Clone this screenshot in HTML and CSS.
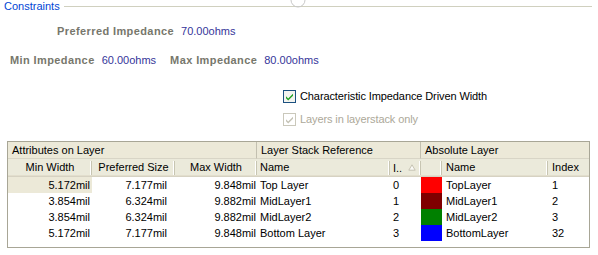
FILE: index.html
```html
<!DOCTYPE html>
<html>
<head>
<meta charset="utf-8">
<link rel="stylesheet" href="styles.css">
</head>
<body>
<div class="page">
  <div class="group-title">
    <span class="group-label">Constraints</span>
    <span class="group-line"></span>
  </div>
  <svg class="knob" width="16" height="8" viewBox="0 0 16 8"><path d="M1 0 A7 7 0 0 0 15 0" fill="none" stroke="#c8c8c8" stroke-width="1"/></svg>

  <div class="imp-row pref">
    <span class="imp-label">Preferred Impedance</span>
    <span class="imp-value">70.00ohms</span>
  </div>
  <div class="imp-row minmax">
    <span class="imp-label">Min Impedance</span>
    <span class="imp-value">60.00ohms</span>
    <span class="imp-label gap">Max Impedance</span>
    <span class="imp-value">80.00ohms</span>
  </div>

  <div class="check-row first">
    <span class="cb">
      <svg width="13" height="13" viewBox="0 0 13 13"><rect x="0.5" y="0.5" width="12" height="12" fill="#f4f4f0" stroke="#1c5180"/><path d="M3 6.2 L5.2 8.5 L10 3.8 L10 5.8 L5.2 10.5 L3 8.2 Z" fill="#21a121"/></svg>
    </span>
    <span class="cb-label">Characteristic Impedance Driven Width</span>
  </div>
  <div class="check-row second">
    <span class="cb">
      <svg width="13" height="13" viewBox="0 0 13 13"><rect x="0.5" y="0.5" width="12" height="12" fill="#ffffff" stroke="#cac8bb"/><path d="M3 6.2 L5.2 8.5 L10 3.8 L10 5.8 L5.2 10.5 L3 8.2 Z" fill="#c4c2b5"/></svg>
    </span>
    <span class="cb-label disabled">Layers in layerstack only</span>
  </div>

  <div class="grid-wrap">
    <div class="grid">
      <div class="gh span3">Attributes on Layer</div>
      <div class="gh span2">Layer Stack Reference</div>
      <div class="gh span3 last">Absolute Layer</div>

      <div class="sh center">Min Width</div>
      <div class="sh center">Preferred Size</div>
      <div class="sh center">Max Width</div>
      <div class="sh left3">Name</div>
      <div class="sh left3 sort">I.. <svg class="tri" width="8" height="7" viewBox="0 0 8 7"><path d="M4 0.8 L7.2 6.2 L0.8 6.2 Z" fill="#fafaf6" stroke="#c6c3b3" stroke-width="1"/></svg></div>
      <div class="sh"></div>
      <div class="sh left4">Name</div>
      <div class="sh left4 last">Index</div>

      <div class="c r1 focus">5.172mil</div><div class="c r2">7.177mil</div><div class="c r3">9.848mil</div><div class="c l3">Top Layer</div><div class="c l3">0</div><div class="c sw red"></div><div class="c l4">TopLayer</div><div class="c l4">1</div>
      <div class="c r1">3.854mil</div><div class="c r2">6.324mil</div><div class="c r3">9.882mil</div><div class="c l3">MidLayer1</div><div class="c l3">1</div><div class="c sw maroon"></div><div class="c l4">MidLayer1</div><div class="c l4">2</div>
      <div class="c r1">3.854mil</div><div class="c r2">6.324mil</div><div class="c r3">9.882mil</div><div class="c l3">MidLayer2</div><div class="c l3">2</div><div class="c sw green"></div><div class="c l4">MidLayer2</div><div class="c l4">3</div>
      <div class="c r1">5.172mil</div><div class="c r2">7.177mil</div><div class="c r3">9.848mil</div><div class="c l3">Bottom Layer</div><div class="c l3">3</div><div class="c sw blue"></div><div class="c l4">BottomLayer</div><div class="c l4">32</div>
    </div>
  </div>
</div>
</body>
</html>
```
FILE: styles.css
```css
html, body {
  margin: 0;
  padding: 0;
  background: #ffffff;
}
body {
  font-family: "Liberation Sans", Arial, sans-serif;
  font-size: 11px;
  color: #000000;
  width: 598px;
  height: 255px;
  overflow: hidden;
}
.page {
  position: relative;
  width: 598px;
  height: 255px;
}
.group-title {
  display: flex;
  align-items: center;
  height: 13px;
}
.group-label {
  color: #0046d5;
  padding-left: 4px;
  line-height: 13px;
}
.group-line {
  flex: 1;
  height: 1px;
  background: #d0d0bf;
  margin-left: 4px;
  margin-right: 6px;
}
.knob {
  position: absolute;
  left: 290px;
  top: 0;
}
.imp-row {
  display: flex;
  align-items: center;
  height: 14px;
  line-height: 14px;
}
.imp-row.pref {
  margin-top: 11px;
  padding-left: 57px;
}
.imp-row.minmax {
  margin-top: 15px;
  padding-left: 10px;
}
.imp-label {
  font-weight: bold;
  color: #77776c;
  letter-spacing: 0.4px;
  margin-right: 7px;
}
.imp-label.gap {
  margin-left: 14px;
}
.imp-value {
  color: #35359a;
  letter-spacing: 0px;
}
.check-row {
  display: flex;
  align-items: center;
  height: 14px;
  padding-left: 283px;
}
.check-row.first {
  margin-top: 22px;
}
.check-row.second {
  margin-top: 9px;
}
.cb {
  width: 13px;
  height: 13px;
  display: flex;
}
.cb-label {
  margin-left: 4px;
  line-height: 14px;
  letter-spacing: -0.1px;
}
.cb-label.disabled {
  color: #aca899;
}
.grid-wrap {
  margin-top: 15px;
  margin-left: 7px;
  width: 581px;
  height: 105px;
  border: 1px solid #a8a696;
  background: #ffffff;
}
.grid {
  display: grid;
  grid-template-columns: 84px 83px 82px 133px 31px 21px 106px 41px;
  grid-auto-rows: 16px;
  grid-template-rows: 17px 18px;
}
.gh {
  background: #ece9d8;
  line-height: 16px;
  padding-left: 4px;
  border-bottom: 1px solid #d8d5c6;
  border-right: 1px solid #c3c0b0;
  white-space: nowrap;
  overflow: hidden;
}
.gh.last {
  border-right: none;
}
.span3 { grid-column: span 3; }
.span2 { grid-column: span 2; }
.sh {
  position: relative;
  background: #ebeadb;
  line-height: 17px;
  white-space: nowrap;
  overflow: hidden;
  box-shadow: inset 0 -1px 0 #d6d2c2, inset 0 -2px 0 #e2decd;
}
.sh::after {
  content: "";
  position: absolute;
  right: 0;
  top: 2px;
  bottom: 2px;
  width: 1px;
  background: #c7c5b2;
  box-shadow: -1px 0 0 #ffffff;
}
.sh.last::after {
  display: none;
}
.sh.center { text-align: center; }
.sh.left3 { padding-left: 3px; }
.sh.left4 { padding-left: 4px; }
.sh.sort {
  display: flex;
  align-items: center;
}
.tri {
  margin-left: 6px;
  margin-top: -1px;
}
.c {
  line-height: 16px;
  white-space: nowrap;
  overflow: hidden;
}
.c.r1 { text-align: right; padding-right: 2px; }
.c.r2 { text-align: right; padding-right: 8px; }
.c.r3 { text-align: right; padding-right: 1px; }
.c.l3 { padding-left: 3px; }
.c.l4 { padding-left: 4px; }
.c.focus { background: #ece9d8; }
.sw.red { background: #ff0000; }
.sw.maroon { background: #800000; }
.sw.green { background: #008000; }
.sw.blue { background: #0000ff; }
```
